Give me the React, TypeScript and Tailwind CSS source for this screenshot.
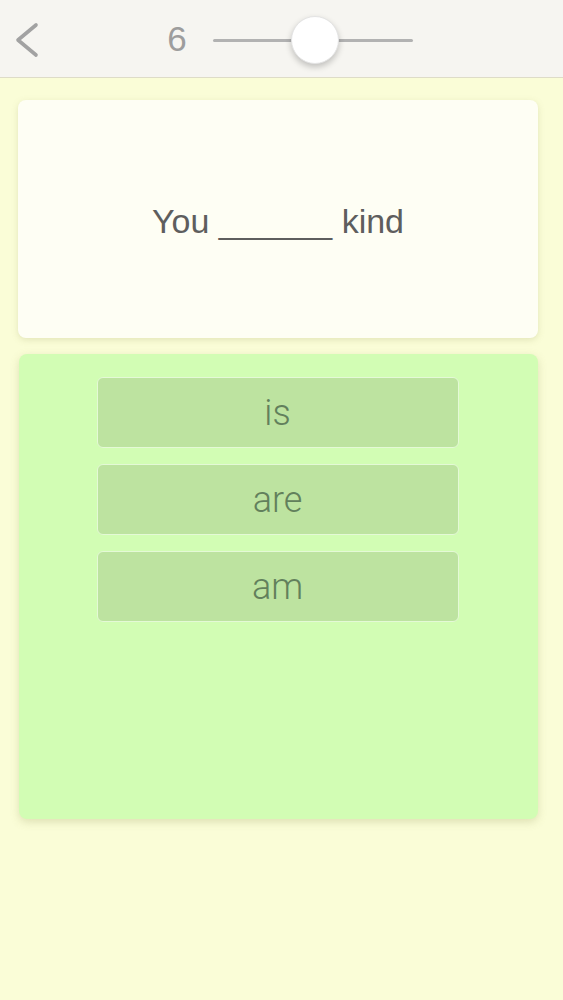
const choices = ['is', 'are', 'am'];

export default function App() {
  return (
    <div
      className="flex min-h-[1000px] flex-col bg-[#fafdd7]"
      style={{ fontFamily: '"Liberation Sans", Arial, sans-serif' }}
    >
      <header className="flex h-[78px] items-center border-b border-[#dedcc8] bg-[#f6f5f1]">
        <svg className="ml-[12px] mt-[2px] h-[36px] w-[28px]" viewBox="0 0 28 36" fill="none">
          <path d="M24 3 L6 18 L24 33" stroke="#a2a2a2" strokeWidth="3.6" strokeLinecap="round" strokeLinejoin="round" />
        </svg>
        <span className="ml-[125px] w-[24px] text-center text-[35px] leading-none text-[#9d9d9d]">6</span>
        <div className="relative ml-[24px] mt-[4px] flex h-[50px] w-[200px] items-center">
          <div className="h-[3px] w-full rounded-full bg-[#b2b2b2]" />
          <div className="absolute left-[78px] top-[0px] h-[48px] w-[48px] rounded-full border border-[#e4e4e4] bg-white shadow-[0_3px_6px_rgba(0,0,0,0.22)]" />
        </div>
      </header>

      <main className="flex flex-col gap-[16px] pl-[18px] pr-[25px] pt-[22px]">
        <section className="flex h-[238px] items-center justify-center rounded-[8px] bg-[#fefef4] shadow-[0_2px_6px_rgba(160,160,100,0.25)]">
          <p className="mt-[4px] text-[34px] text-[#5e5e5e]">You ______ kind</p>
        </section>

        <section className="ml-px flex h-[465px] flex-col items-center gap-[16px] rounded-[8px] bg-[#d2fdb4] pt-[23px] shadow-[0_3px_8px_rgba(160,160,100,0.3)]">
          {choices.map((c) => (
            <button
              key={c}
              className="-ml-[2px] flex h-[71px] w-[362px] items-center justify-center rounded-[6px] border border-[#e4f9d6] bg-[#bde3a0] text-[36px] font-light text-[#62805c]"
              style={{ fontFamily: 'Roboto, "Liberation Sans", sans-serif' }}
            >
              {c}
            </button>
          ))}
        </section>
      </main>
    </div>
  );
}
